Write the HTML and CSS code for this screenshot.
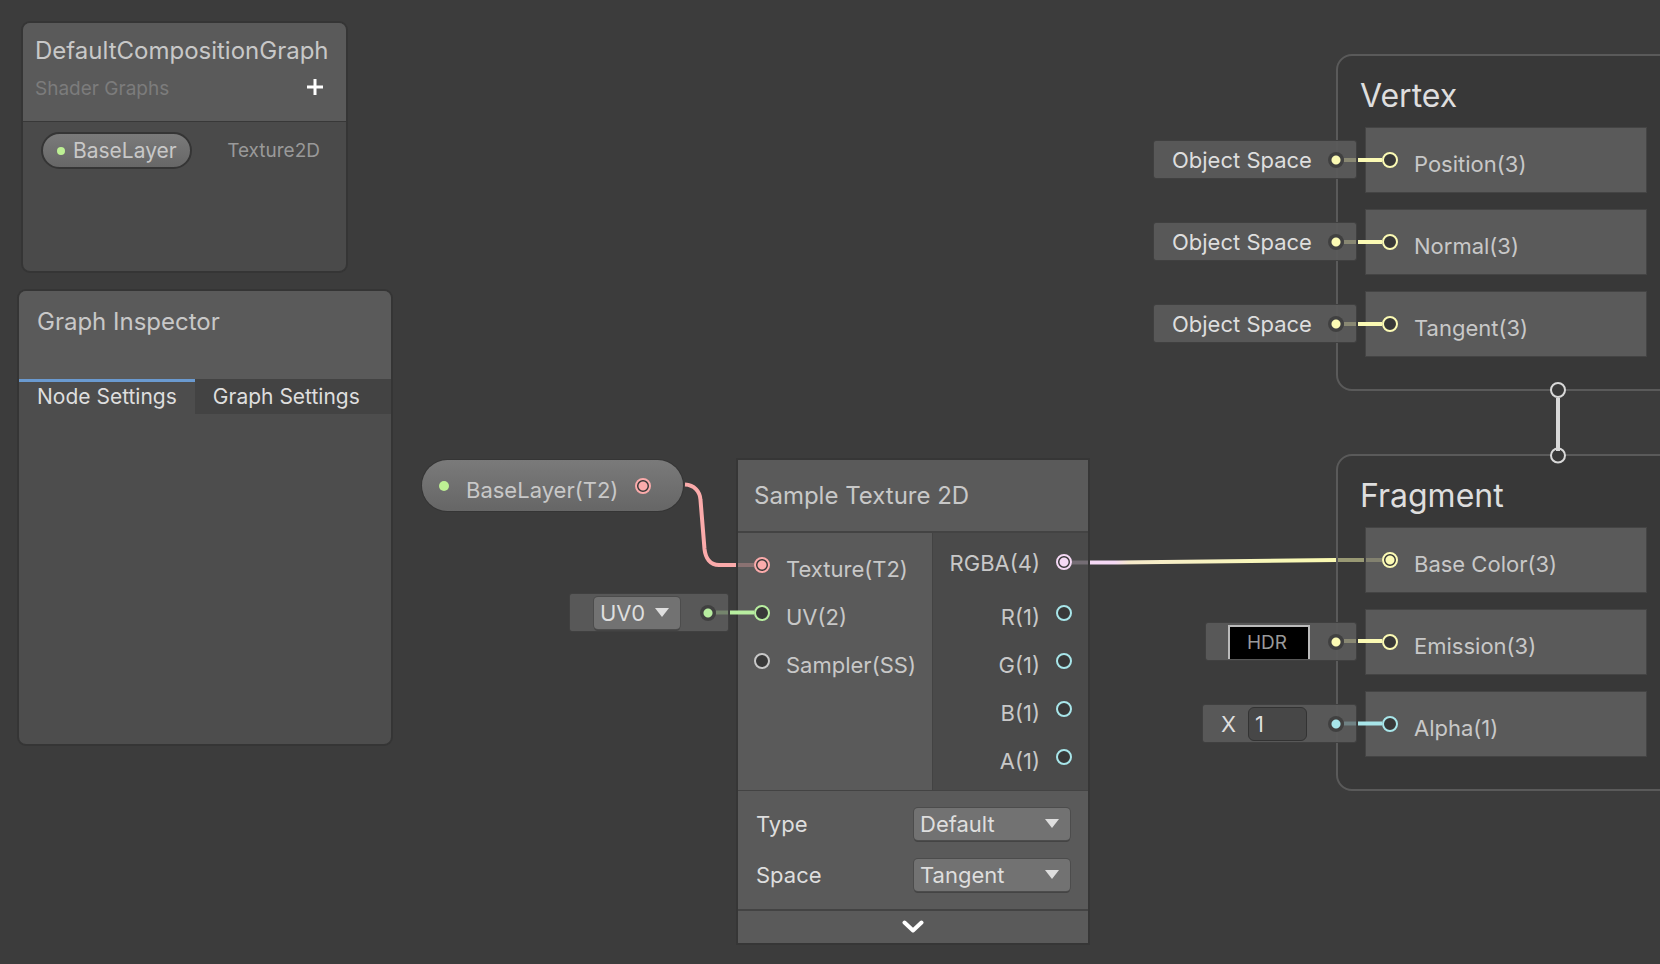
FILE: index.html
```html
<!DOCTYPE html>
<html lang="en">
<head>
<meta charset="utf-8">
<title>Shader Graph</title>
<link rel="stylesheet" href="styles.css">
</head>
<body>
<main class="canvas">
  <section class="panel blackboard">
    <header class="panel-header">
      <h1 class="panel-title">DefaultCompositionGraph</h1>
      <div class="panel-subrow">
        <span class="panel-subtitle">Shader Graphs</span>
        <button class="add-button" type="button" aria-label="Add property">
          <svg width="16" height="16" viewBox="0 0 16 16"><path d="M8 0v16M0 8h16" stroke="currentColor" stroke-width="3"/></svg>
        </button>
      </div>
    </header>
    <div class="property-row">
      <button class="property-pill" type="button"><span class="dot dot-small"></span>BaseLayer</button>
      <span class="property-type">Texture2D</span>
    </div>
  </section>

  <section class="panel inspector">
    <header class="panel-header inspector-header"><h2 class="panel-title">Graph Inspector</h2></header>
    <div class="tabs" role="tablist">
      <button class="tab tab-active" type="button" role="tab" aria-selected="true">Node Settings</button>
      <button class="tab" type="button" role="tab" aria-selected="false">Graph Settings</button>
    </div>
  </section>

  <section class="context vertex">
    <h2 class="context-title">Vertex</h2>
    <ul class="blocks">
      <li class="block"><div class="slot"><span>Object Space</span><i class="pin yellow"></i></div><i class="port yellow"></i><span class="port-label">Position(3)</span></li>
      <li class="block"><div class="slot"><span>Object Space</span><i class="pin yellow"></i></div><i class="port yellow"></i><span class="port-label">Normal(3)</span></li>
      <li class="block"><div class="slot"><span>Object Space</span><i class="pin yellow"></i></div><i class="port yellow"></i><span class="port-label">Tangent(3)</span></li>
    </ul>
  </section>

  <section class="context fragment">
    <h2 class="context-title">Fragment</h2>
    <ul class="blocks">
      <li class="block"><i class="port yellow filled"></i><span class="port-label">Base Color(3)</span></li>
      <li class="block"><div class="slot slot-color"><button class="hdr" type="button">HDR</button><i class="pin yellow"></i></div><i class="port yellow"></i><span class="port-label">Emission(3)</span></li>
      <li class="block"><div class="slot slot-number"><label for="alpha">X</label><input id="alpha" class="number" type="text" value="1"><i class="pin cyan"></i></div><i class="port cyan"></i><span class="port-label">Alpha(1)</span></li>
    </ul>
  </section>

  <div class="property-node"><span class="dot"></span><span class="port-label">BaseLayer(T2)</span><i class="port red filled"></i></div>

  <section class="node">
    <header class="node-header"><h2 class="panel-title">Sample Texture 2D</h2></header>
    <div class="node-ports">
      <ul class="inputs">
        <li class="port-row"><i class="port red filled"></i><span class="port-label">Texture(T2)</span></li>
        <li class="port-row">
          <div class="slot slot-uv">
            <span class="dropdown"><select aria-label="UV channel"><option>UV0</option></select><svg class="arrow" width="14" height="9" viewBox="0 0 14 9"><path d="M0 0h14L7 9z" fill="currentColor"/></svg></span>
            <i class="pin green"></i>
          </div>
          <i class="port green"></i><span class="port-label">UV(2)</span>
        </li>
        <li class="port-row"><i class="port gray"></i><span class="port-label">Sampler(SS)</span></li>
      </ul>
      <ul class="outputs">
        <li class="port-row vector"><span class="port-label">RGBA(4)</span><i class="port pink filled"></i></li>
        <li class="port-row"><span class="port-label">R(1)</span><i class="port cyan"></i></li>
        <li class="port-row"><span class="port-label">G(1)</span><i class="port cyan"></i></li>
        <li class="port-row"><span class="port-label">B(1)</span><i class="port cyan"></i></li>
        <li class="port-row"><span class="port-label">A(1)</span><i class="port cyan"></i></li>
      </ul>
    </div>
    <div class="node-controls">
      <div class="control"><label for="type">Type</label><span class="dropdown wide"><select id="type"><option>Default</option></select><svg class="arrow" width="14" height="9" viewBox="0 0 14 9"><path d="M0 0h14L7 9z" fill="currentColor"/></svg></span></div>
      <div class="control"><label for="space">Space</label><span class="dropdown wide"><select id="space"><option>Tangent</option></select><svg class="arrow" width="14" height="9" viewBox="0 0 14 9"><path d="M0 0h14L7 9z" fill="currentColor"/></svg></span></div>
    </div>
    <button class="node-expand" type="button" aria-label="Toggle preview">
      <svg width="22" height="14" viewBox="0 0 22 14"><path d="M2.500 2.500 11 10.500 19.500 2.500" fill="none" stroke="currentColor" stroke-width="4" stroke-linecap="round" stroke-linejoin="round"/></svg>
    </button>
  </section>

  <svg class="wires" width="1660" height="964" viewBox="0 0 1660 964" fill="none" stroke-width="4" aria-hidden="true">
    <defs>
      <linearGradient id="rgba" gradientUnits="userSpaceOnUse" x1="1090" y1="0" x2="1336" y2="0">
        <stop offset="0" stop-color="#f5d9f5"/><stop offset=".1" stop-color="#f5d9f5"/><stop offset=".16" stop-color="#f6eacb"/><stop offset=".75" stop-color="#f9f9b8"/><stop offset="1" stop-color="#faf9b0"/>
      </linearGradient>
    </defs>
    <g stroke="#fbabab">
      <path d="M685 484.500C694 485 700 491 700.500 500L704.500 549C705.500 558 710 565 719 565H736"/>
      <path d="M738 565H754" opacity=".3"/>
    </g>
    <g stroke="#b8eea0"><path d="M716 612.500H728" opacity=".3"/><path d="M730 612.500H754"/></g>
    <path d="M1072 562.500H1088" stroke="#f5d9f5" opacity=".25"/>
    <path d="M1090 562.500H1118L1336 560" stroke="url(#rgba)"/>
    <path d="M1338 560H1364" stroke="#faf9b0" opacity=".5"/>
    <path d="M1366 560H1382" stroke="#faf9b0" opacity=".25"/>
    <g stroke="#fbfab4">
      <path d="M1344 160H1356M1344 242H1356M1344 324H1356M1344 641H1356" opacity=".3"/>
      <path d="M1358 160H1382M1358 242H1382M1358 324H1382M1358 641H1382"/>
    </g>
    <g stroke="#a8e6ea"><path d="M1344 723.500H1356" opacity=".3"/><path d="M1358 723.500H1382"/></g>
    <g stroke="#d8d8d8">
      <circle cx="1558" cy="390" r="7" fill="#383838" stroke-width="2"/>
      <circle cx="1558" cy="455.500" r="7" fill="#383838" stroke-width="2"/>
      <path d="M1558 398V451"/>
    </g>
  </svg>
</main>
</body>
</html>
```
FILE: styles.css
```css
* { box-sizing: border-box; }
body { margin: 0; background: #3c3c3c; color: #c8c8c8; font: 22px/26px Inter, "Liberation Sans", sans-serif; }
h1, h2 { margin: 0; font-weight: 400; }
ul { margin: 0; padding: 0; list-style: none; }
button, select, input { font: inherit; color: inherit; border: 0; padding: 0; margin: 0; }
button { background: none; }

.canvas { position: relative; min-height: 100vh; overflow: hidden; }

.panel { position: absolute; border-radius: 7px; overflow: hidden; box-shadow: 0 0 0 2px #353535; }
.panel-header { background: #5a5a5a; }
.panel-title { font-size: 24px; line-height: 32px; }
.blackboard { left: 23px; top: 23px; width: 323px; height: 248px; background: #4a4a4a; }
.blackboard .panel-header { height: 99px; padding: 12px 23px 0 12px; border-bottom: 1px solid #383838; }
.panel-subrow { display: flex; align-items: flex-start; justify-content: space-between; margin-top: 9px; }
.panel-subtitle { color: #7c7c7c; font-size: 19px; }
.add-button { display: flex; padding-top: 3px; color: #fff; }
.property-row { display: flex; align-items: center; justify-content: space-between; padding: 10px 26px 0 18px; }
.property-pill { display: flex; align-items: center; gap: 8px; height: 37px; padding: 0 13px 0 14px; border: 2px solid #353535; border-radius: 19px; background: linear-gradient(#7a7a7a, #676767); font-size: 21px; }
.dot { width: 10px; height: 10px; border-radius: 50%; background: #bdf094; }
.dot-small { width: 8px; height: 8px; }
.property-type { color: #999; font-size: 19px; }

.inspector { left: 19px; top: 291px; width: 372px; height: 453px; background: #4d4d4d; }
.inspector-header { height: 88px; padding: 15px 18px; }
.tabs { display: flex; height: 35px; background: #434343; font-size: 21px; }
.tab { padding: 0 18px 2px; color: #dedede; border-top: 3px solid transparent; }
.tab-active { background: #4d4d4d; border-top-color: #6a9ad0; }

.context { position: absolute; left: 1336px; right: -24px; height: 337px; padding: 22px 36px 0 28px; border: 2px solid #5a5a5a; border-radius: 16px; background: #383838; }
.vertex { top: 54px; }
.fragment { top: 454px; }
.context-title { margin-left: -6px; font-size: 32px; line-height: 36px; color: #dedede; }
.blocks { display: grid; gap: 18px; margin-top: 14px; }
.block { position: relative; display: flex; align-items: center; height: 64px; padding-left: 16px; background: #5a5a5a; box-shadow: 0 0 0 1px #444; }
.port { flex: none; width: 16px; height: 16px; border: 2px solid var(--c); border-radius: 50%; background: #383838; }
.port.filled { background: radial-gradient(circle, var(--c) 4px, #383838 5px); }
.port-label { padding-top: 8px; margin: 0 16px; }
.vector .port-label { padding-top: 2px; }
.yellow { --c: #fbfab4; }
.red { --c: #fbabab; }
.green { --c: #b8eea0; }
.cyan { --c: #a8e6ea; }
.pink { --c: #f5d9f5; }
.gray { --c: #c8c8c8; }

.slot { position: absolute; top: 13px; right: calc(100% + 10px); display: flex; align-items: center; justify-content: space-between; height: 37px; width: 202px; padding: 0 12px 0 18px; border-radius: 2px; background: #5a5a5af0; color: #dedede; box-shadow: 0 0 0 1px #404040; }
.slot-color { width: 150px; padding-left: 22px; }
.slot-number { width: 153px; }
.inputs .slot-uv { top: 5px; right: calc(100% + 26px); width: 158px; padding-left: 24px; }
.pin { width: 16px; height: 16px; border-radius: 50%; background: radial-gradient(circle, var(--c) 4px, #404040 5px); }
.hdr { width: 82px; height: 34px; margin-right: 18px; padding-right: 4px; border: 2px solid #bbb; border-bottom: 0; background: #000; color: #999; font-size: 19px; }
.number { width: 59px; height: 34px; margin-right: 9px; padding-left: 6px; border: 1px solid #333; border-radius: 6px; background: #474747; }

.property-node { position: absolute; left: 422px; top: 460px; display: flex; align-items: center; width: 261px; height: 51px; padding-left: 17px; border-radius: 26px; background: linear-gradient(#7a7a7a, #666); box-shadow: 0 0 0 1px #353535; }
.property-node .port-label { margin: 0 17px; }

.node { position: absolute; left: 738px; top: 460px; width: 350px; background: #5a5a5a; box-shadow: 0 0 0 2px #363636; }
.node-header { padding: 20px 16px; height: 73px; border-bottom: 2px solid #434343; }
.node-ports { display: grid; grid-template-columns: 195px 1fr; height: 257px; }
.port-row { position: relative; display: flex; align-items: center; height: 48px; }
.inputs { padding: 8px 0 0 16px; border-right: 1px solid #434343; }
.outputs { padding: 6px 16px 0 0; background: #4a4a4a; }
.outputs .port-row { justify-content: flex-end; }
.outputs .vector { height: 46px; margin-bottom: 4px; }
.node-controls { display: grid; gap: 19px; padding: 17px 18px 18px; border-top: 1px solid #434343; border-bottom: 2px solid #434343; }
.control { display: flex; align-items: center; justify-content: space-between; height: 32px; color: #dedede; }
.dropdown { position: relative; width: 86px; height: 32px; color: #dedede; }
.dropdown.wide { width: 156px; }
.dropdown select { appearance: none; width: 100%; height: 100%; padding-left: 6px; border-radius: 4px; background: #727272; box-shadow: 0 0 0 1px #4c4c4c, 0 2px 0 #444; }
.arrow { position: absolute; right: 11px; top: 11px; pointer-events: none; }
.node-expand { display: flex; align-items: center; justify-content: center; width: 100%; height: 32px; color: #fff; }
.wires { position: absolute; left: 0; top: 0; pointer-events: none; }
```
